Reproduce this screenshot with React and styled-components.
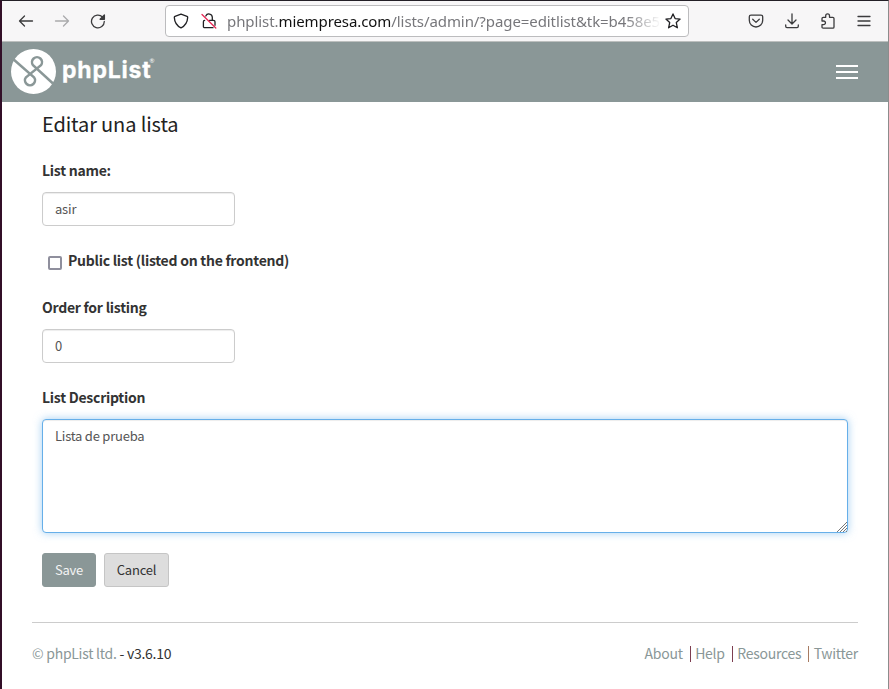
import React from "react";
import styled, { createGlobalStyle } from "styled-components";

const Global = createGlobalStyle`
  * { box-sizing: border-box; }
  body { margin: 0; background: #fff; }
  input, textarea, button { font-family: inherit; margin: 0; }
`;

const Window = styled.div`
  width: 889px;
  height: 689px;
  overflow: hidden;
  display: flex;
  flex-direction: column;
  background: #fff;
  border-left: 2px solid #320f28;
  border-right: 1px solid #8c8c8c;
  border-top: 1px solid #231f26;
  font-family: "Noto Sans CJK SC", "Noto Sans", sans-serif;
  color: #333;
`;

const Toolbar = styled.div`
  flex: none;
  height: 41px;
  display: flex;
  align-items: center;
  background: #f7f6f7;
  border-bottom: 1px solid #bcbfbe;
  padding: 0 16px 1px 16px;
`;

const NavIcons = styled.div`
  display: flex;
  gap: 20px;
  width: 147px;
`;

const ToolIcons = styled.div`
  display: flex;
  gap: 20px;
  margin-left: auto;
`;

const Icon = styled.svg`
  display: block;
  flex: none;
  width: 16px;
  height: 16px;
  fill: none;
  stroke: ${(p) => p.$color || "#3b3b3d"};
  stroke-width: 1.3;
  stroke-linecap: round;
  stroke-linejoin: round;
`;

const AddressBar = styled.div`
  width: 524px;
  height: 32px;
  display: flex;
  align-items: center;
  gap: 12px;
  padding: 0 7px;
  background: #fff;
  border: 1px solid #bcbcbe;
  border-radius: 4px;
`;

const Url = styled.div`
  flex: 1;
  min-width: 0;
  overflow: hidden;
  margin: 0 -8px 0 -2px;
  white-space: nowrap;
  font: 15px/24px "Noto Sans", sans-serif;
  letter-spacing: -0.08px;
  color: #77777b;
  mask-image: linear-gradient(to right, #000 calc(100% - 36px), transparent);
`;

const Domain = styled.span`
  color: #111;
`;

const Header = styled.header`
  flex: none;
  height: 60px;
  display: flex;
  align-items: center;
  justify-content: space-between;
  padding: 0 30px 0 9px;
  background: #8a9797;
`;

const Brand = styled.div`
  display: flex;
  align-items: center;
  gap: 6px;
  padding-bottom: 1px;
  color: #fff;
`;

const Emblem = styled.svg`
  display: block;
  width: 45px;
  height: 45px;
`;

const Wordmark = styled.div`
  display: flex;
  align-items: flex-start;
  font: 700 23px/30px Inter, sans-serif;
  letter-spacing: 0.8px;
  -webkit-text-stroke: 0.3px #fff;
  padding-bottom: 3px;
`;

const Registered = styled.span`
  font: 6px/8px Lato, sans-serif;
  -webkit-text-stroke: 0;
  letter-spacing: 0;
  margin: 2px 0 0 -2px;
`;

const Menu = styled.div`
  display: grid;
  gap: 4px;
  width: 22px;
`;

const MenuLine = styled.span`
  height: 2px;
  background: #fff;
`;

const Form = styled.main`
  padding: 8px 40px 0;
`;

const Title = styled.h3`
  margin: 0 0 20px;
  font-size: 20px;
  line-height: 28px;
  font-weight: 400;
  letter-spacing: -0.13px;
  color: #222;
`;

const Label = styled.label`
  display: block;
  margin-top: ${(p) => p.$top || 0}px;
  font-size: 14px;
  line-height: 24px;
  font-weight: 700;
  letter-spacing: -0.26px;
`;

const Field = styled.input`
  display: block;
  width: 193px;
  height: 34px;
  margin-top: 10px;
  padding: 0 12px 2px;
  border: 1px solid #ccc;
  border-radius: 4px;
  outline: 0;
  box-shadow: inset 0 1px 1px rgba(0, 0, 0, 0.075);
  font-size: 13px;
  letter-spacing: -0.2px;
  color: #555;
`;

const CheckRow = styled.div`
  display: flex;
  align-items: center;
  gap: 6px;
  margin: 22px 0 0 6px;
`;

const Checkbox = styled.input`
  appearance: none;
  width: 14px;
  height: 14px;
  margin-top: 6px;
  border: 2px solid #8f8f9d;
  border-radius: 2px;
  background: #fff;
`;

const Area = styled.textarea`
  display: block;
  width: 806px;
  height: 114px;
  margin-top: 10px;
  padding: 6px 12px;
  border: 1px solid #66afe9;
  border-radius: 4px;
  outline: 0;
  resize: vertical;
  box-shadow: inset 0 1px 1px rgba(0, 0, 0, 0.075), 0 0 8px rgba(102, 175, 233, 0.6);
  font-size: 13px;
  line-height: 20px;
  letter-spacing: -0.23px;
  color: #555;

  &::-webkit-resizer {
    background:
      linear-gradient(135deg, #fff 0 58%, transparent 58%),
      repeating-linear-gradient(135deg, transparent 0 1.2px, #777 1.2px 2.12px);
  }
`;

const Actions = styled.div`
  display: flex;
  gap: 8px;
  margin-top: 20px;
`;

const Button = styled.button`
  width: ${(p) => p.$width}px;
  height: 34px;
  padding: 0 0 2px;
  border: 1px solid ${(p) => (p.$primary ? "#8a9797" : "#c5c5c5")};
  border-radius: 3px;
  background: ${(p) => (p.$primary ? "#8a9797" : "#ddd")};
  color: ${(p) => (p.$primary ? "#f4f4f4" : "#333")};
  font-size: 13px;
  letter-spacing: -0.2px;
`;

const Footer = styled.footer`
  display: flex;
  justify-content: space-between;
  margin: 35px 30px 0;
  padding-top: 18px;
  border-top: 1px solid #ccc;
  font-size: 14px;
  line-height: 24px;
  letter-spacing: -0.27px;
`;

const Link = styled.a`
  color: #8a9797;
`;

const Links = styled.nav`
  display: flex;
`;

const Divider = styled.span`
  width: 1px;
  height: 16px;
  margin: 5px 4.500px 0 7px;
  background: ${(p) => p.$color};
`;

export default function App() {
  return (
    <>
      <Global />
      <Window>
        <Toolbar>
          <NavIcons>
            <Icon viewBox="0 0 16 16"><path d="M14.5 8h-13M6.5 3L1.5 8l5 5" /></Icon>
            <Icon viewBox="0 0 16 16" $color="#aaaaac"><path d="M1.5 8h13M9.5 3l5 5-5 5" /></Icon>
            <Icon viewBox="0 0 16 16"><path d="M14.3 8.5A6.4 6.4 0 1 1 12.5 4" /><path d="M14.4 2v4.3h-4.3z" fill="#3b3b3d" /></Icon>
          </NavIcons>
          <AddressBar>
            <Icon viewBox="0 0 16 16" $color="#202023"><path d="M8 1.2l6 2.2c.5.2.7.5.7 1C14.4 9.5 12 13 8 14.9 4 13 1.6 9.5 1.3 4.4c0-.5.2-.8.7-1z" /></Icon>
            <Icon viewBox="0 0 16 16" $color="#202023">
              <path d="M4.8 3A3.400 3.400 0 0 1 11.300 4.300V7M8.500 7.300h4c1 0 1.500.5 1.500 1.500v3.500M12 14.700H3.700c-.8 0-1.300-.5-1.300-1.300V8.800c0-.8.4-1.300 1.200-1.400" />
              <path d="M1 1.500l13.800 13.500" stroke="#e82855" />
            </Icon>
            <Url>phplist.<Domain>miempresa.com</Domain>/lists/admin/?page=editlist&amp;tk=b458e5</Url>
            <Icon viewBox="0 0 16 16" $color="#202023"><path d="M8 .9l2.100 4.700 5 .5-3.800 3.500 1.100 5.200L8 12.200l-4.400 2.600 1.100-5.200L.9 6.100l5-.5z" /></Icon>
          </AddressBar>
          <ToolIcons>
            <Icon viewBox="0 0 16 16"><path d="M3 2.200h10c1 0 1.700.6 1.700 1.600v3.500a6.700 6.700 0 0 1-13.400 0V3.800c0-1 .7-1.600 1.700-1.600zM4.700 6.300L8 9.400l3.300-3.100" /></Icon>
            <Icon viewBox="0 0 16 16"><path d="M8 .8v10M4 7l4 4 4-4M1.700 12v1.300c0 .8.500 1.300 1.300 1.300h10c.8 0 1.300-.5 1.300-1.300V12" /></Icon>
            <Icon viewBox="0 0 16 16"><path d="M2 8V5.500c0-.8.400-1.200 1.200-1.200h2.500V2.700a1.900 1.900 0 0 1 3.800 0v1.600h3.300c.8 0 1.200.4 1.200 1.200V14c0 .8-.4 1.200-1.200 1.200H3.200C2.400 15.200 2 14.800 2 14v-2.300h1.600a1.850 1.850 0 0 0 0-3.700z" /></Icon>
            <Icon viewBox="0 0 16 16"><path d="M2 3.500h12M2 8h12M2 12.500h12" /></Icon>
          </ToolIcons>
        </Toolbar>
        <Header>
          <Brand>
            <Emblem viewBox="0 0 45 45">
              <circle cx="22.5" cy="22.5" r="22.5" fill="#fff" />
              <path
                d="M1.500 9.500L23 28.300A5 5 0 1 1 15 28.300L30 16.200A5 5 0 1 0 22 16.200L42 34.500"
                fill="none"
                stroke="#8a9797"
                strokeWidth="2.500"
              />
            </Emblem>
            <Wordmark><span>phpList</span><Registered>®</Registered></Wordmark>
          </Brand>
          <Menu><MenuLine /><MenuLine /><MenuLine /></Menu>
        </Header>
        <Form>
          <Title>Editar una lista</Title>
          <Label>List name:</Label>
          <Field defaultValue="asir" />
          <CheckRow>
            <Checkbox type="checkbox" />
            <Label>Public list (listed on the frontend)</Label>
          </CheckRow>
          <Label $top={23}>Order for listing</Label>
          <Field defaultValue="0" />
          <Label $top={22}>List Description</Label>
          <Area defaultValue="Lista de prueba" />
          <Actions>
            <Button $primary $width={54}>Save</Button>
            <Button $width={65}>Cancel</Button>
          </Actions>
        </Form>
        <Footer>
          <div><Link>© phpList ltd.</Link> - v3.6.10</div>
          <Links>
            <Link>About</Link><Divider $color="#7d3e50" />
            <Link>Help</Link><Divider $color="#7d3e50" />
            <Link>Resources</Link><Divider $color="#a77b62" />
            <Link>Twitter</Link>
          </Links>
        </Footer>
      </Window>
    </>
  );
}
